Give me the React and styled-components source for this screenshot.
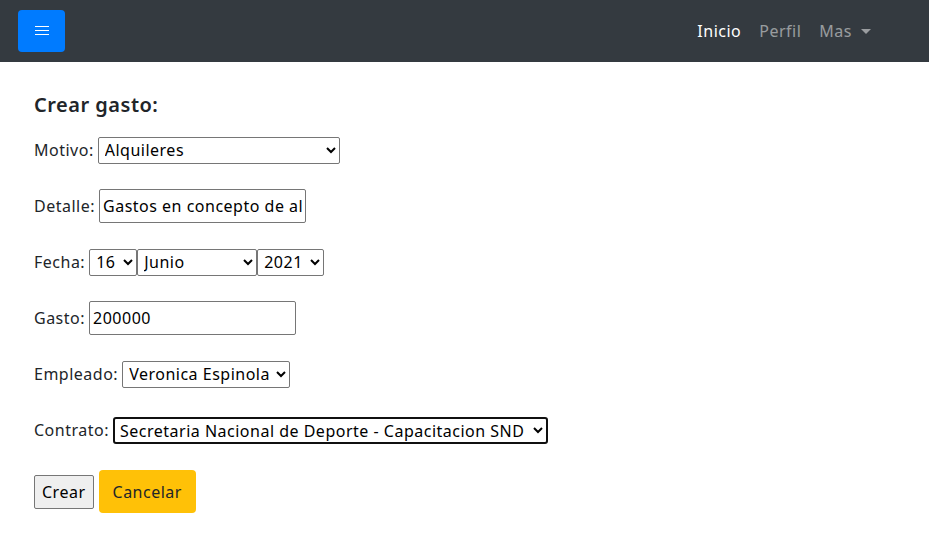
import React from "react";
import styled, { createGlobalStyle } from "styled-components";

const Global = createGlobalStyle`
  body {
    margin: 0;
    font-family: "Noto Sans", "Open Sans", sans-serif;
    font-size: 16px;
    letter-spacing: 0.5px;
    color: #212529;
    background: #fff;
  }
`;

const Navbar = styled.nav`
  height: 62px;
  background: #343a40;
  display: flex;
  align-items: center;
  padding: 0 18px;
`;

const ToggleButton = styled.button`
  width: 47px;
  height: 42px;
  border: none;
  border-radius: 4px;
  background: #007bff;
  display: flex;
  align-items: center;
  justify-content: center;
  padding: 0;
`;

const NavLinks = styled.div`
  margin-left: auto;
  margin-right: 40px;
  display: flex;
  align-items: center;
  gap: 18px;
`;

const NavLink = styled.a`
  font-size: 16px;
  color: ${(p) => (p.$active ? "#fff" : "rgba(255,255,255,0.5)")};
  text-decoration: none;
  display: flex;
  align-items: center;
`;

const Caret = styled.span`
  display: inline-block;
  margin-left: 9px;
  border-top: 5px solid rgba(255, 255, 255, 0.5);
  border-left: 5px solid transparent;
  border-right: 5px solid transparent;
`;

const Main = styled.main`
  padding: 31px 34px;
`;

const Title = styled.h5`
  margin: 0 0 16px;
  font-size: 20px;
  font-weight: 600;
  line-height: 24px;
`;

const Form = styled.form`
  display: flex;
  flex-direction: column;
  gap: 22px;
`;

const Field = styled.div`
  height: 34px;
  display: flex;
  align-items: center;
`;

const Label = styled.label`
  margin-right: 4px;
`;

const Select = styled.select`
  font: inherit;
  letter-spacing: inherit;
  color: #000;
  height: 27px;
  width: ${(p) => p.$w}px;
  border: ${(p) => (p.$focus ? "2px solid #101010" : "1px solid #767676")};
  border-radius: ${(p) => (p.$focus ? "3px" : "2px")};
  background: #fff;
  padding: 0 0 0 ${(p) => (p.$focus ? "1px" : "2px")};
`;

const Input = styled.input`
  font: inherit;
  letter-spacing: inherit;
  color: #000;
  height: 34px;
  box-sizing: border-box;
  width: ${(p) => p.$w}px;
  border: 1px solid #767676;
  border-radius: 2px;
  padding: 0 3px;
`;

const Actions = styled.div`
  display: flex;
  align-items: center;
  gap: 5px;
  margin-top: 1px;
`;

const PlainButton = styled.button`
  font: inherit;
  letter-spacing: inherit;
  height: 34px;
  padding: 0 7px;
  background: #efefef;
  border: 1px solid #767676;
  border-radius: 2px;
  color: #000;
`;

const WarnButton = styled.button`
  font: inherit;
  letter-spacing: inherit;
  height: 43px;
  padding: 0 14px;
  background: #ffc107;
  border: none;
  border-radius: 4px;
  color: #212529;
`;

export default function App() {
  return (
    <>
      <Global />
      <Navbar>
        <ToggleButton>
          <svg width="14" height="10" viewBox="0 0 14 10">
            <path d="M0 0.5h14M0 4.5h14M0 8.5h14" stroke="#fff" strokeWidth="1.2" />
          </svg>
        </ToggleButton>
        <NavLinks>
          <NavLink $active>Inicio</NavLink>
          <NavLink>Perfil</NavLink>
          <NavLink>
            Mas
            <Caret />
          </NavLink>
        </NavLinks>
      </Navbar>
      <Main>
        <Title>Crear gasto:</Title>
        <Form>
          <Field>
            <Label>Motivo:</Label>
            <Select $w={242} defaultValue="Alquileres">
              <option>Alquileres</option>
            </Select>
          </Field>
          <Field>
            <Label>Detalle:</Label>
            <Input $w={207} defaultValue="Gastos en concepto de alquiler" />
          </Field>
          <Field>
            <Label>Fecha:</Label>
            <Select $w={48} defaultValue="16">
              <option>16</option>
            </Select>
            <Select $w={120} defaultValue="Junio">
              <option>Junio</option>
            </Select>
            <Select $w={67} defaultValue="2021">
              <option>2021</option>
            </Select>
          </Field>
          <Field>
            <Label>Gasto:</Label>
            <Input $w={207} defaultValue="200000" />
          </Field>
          <Field>
            <Label>Empleado:</Label>
            <Select $w={168} defaultValue="Veronica Espinola">
              <option>Veronica Espinola</option>
            </Select>
          </Field>
          <Field>
            <Label>Contrato:</Label>
            <Select $w={435} $focus defaultValue="SND">
              <option value="SND">Secretaria Nacional de Deporte - Capacitacion SND</option>
            </Select>
          </Field>
          <Actions>
            <PlainButton type="button">Crear</PlainButton>
            <WarnButton type="button">Cancelar</WarnButton>
          </Actions>
        </Form>
      </Main>
    </>
  );
}
